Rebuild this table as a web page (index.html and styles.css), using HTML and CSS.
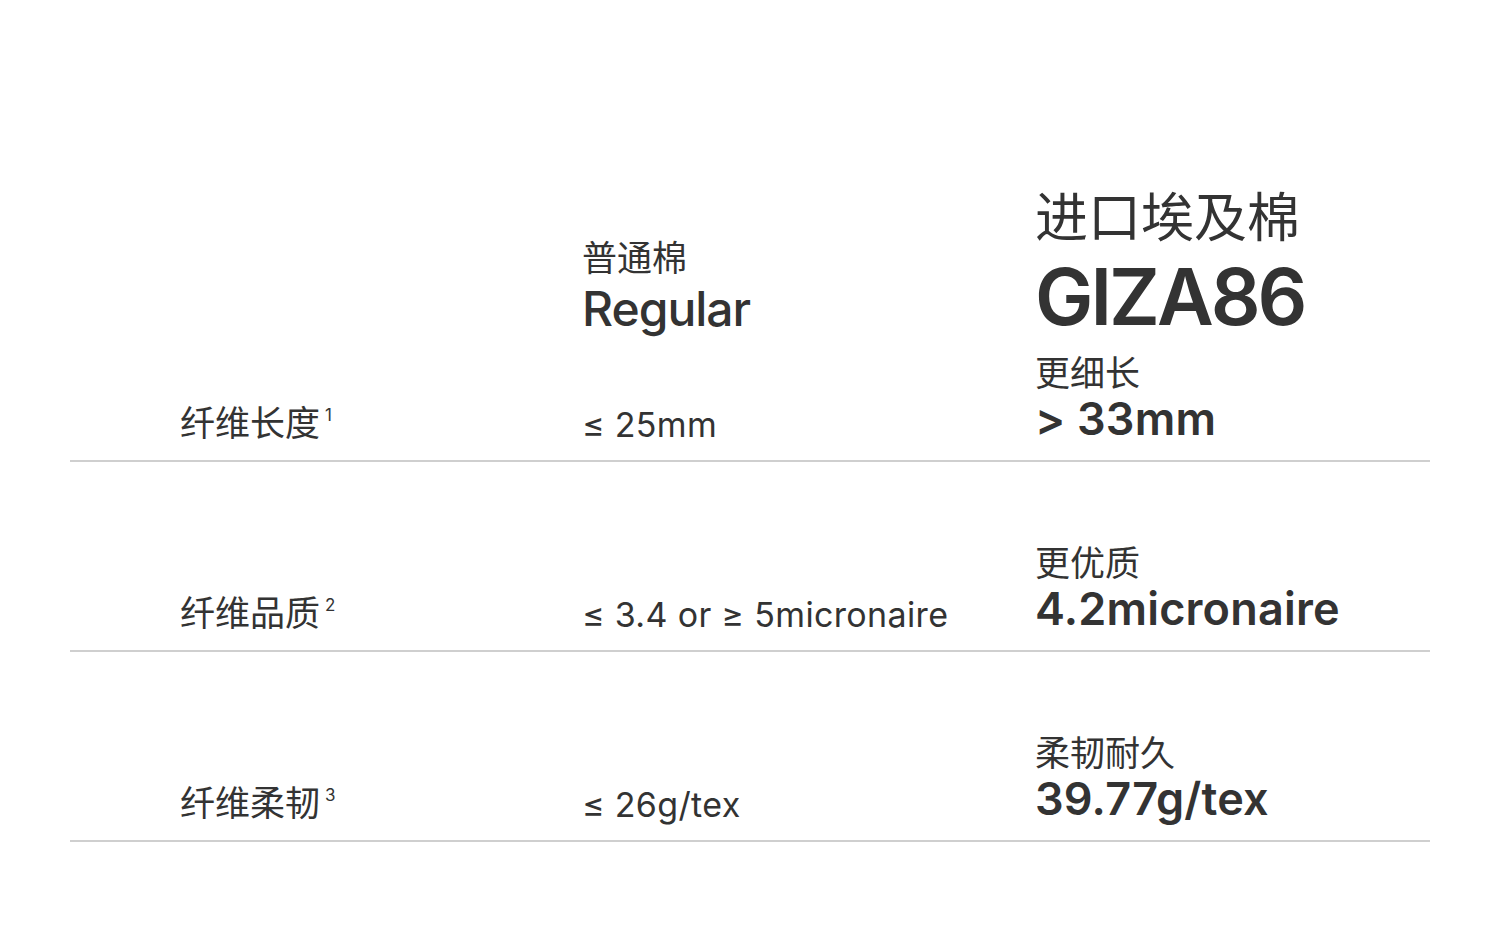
FILE: index.html
```html
<!DOCTYPE html>
<html lang="zh-CN">
<head>
<meta charset="utf-8">
<title>GIZA86</title>
<link rel="stylesheet" href="styles.css">
</head>
<body>
<div class="page">
  <div class="table">
    <div class="head">
      <div class="cell"></div>
      <div class="cell mid">
        <div class="h-cn">普通棉</div>
        <div class="h-en">Regular</div>
      </div>
      <div class="cell">
        <div class="h-cn-big">进口埃及棉</div>
        <div class="h-en-big">GIZA86</div>
      </div>
    </div>
    <div class="row first">
      <div class="cell label">纤维长度<sup>1</sup></div>
      <div class="cell value">≤ 25mm</div>
      <div class="cell">
        <div class="hl-cn">更细长</div>
        <div class="hl-val">&gt; 33mm</div>
      </div>
    </div>
    <div class="row">
      <div class="cell label">纤维品质<sup>2</sup></div>
      <div class="cell value">≤ 3.4 or ≥ 5micronaire</div>
      <div class="cell">
        <div class="hl-cn">更优质</div>
        <div class="hl-val">4.2micronaire</div>
      </div>
    </div>
    <div class="row">
      <div class="cell label">纤维柔韧<sup>3</sup></div>
      <div class="cell value">≤ 26g/tex</div>
      <div class="cell">
        <div class="hl-cn">柔韧耐久</div>
        <div class="hl-val">39.77g/tex</div>
      </div>
    </div>
  </div>
</div>
</body>
</html>
```

FILE: styles.css
```css
* { box-sizing: border-box; }
html, body { margin: 0; padding: 0; background: #fff; }
body {
  font-family: Inter, "Noto Sans CJK SC", sans-serif;
  color: #333;
}
.page {
  padding: 186px 70px 0 70px;
}
.table {
  width: 1360px;
}
.head, .row {
  display: grid;
  grid-template-columns: 402px 453px 1fr;
  padding-left: 110px;
  align-items: end;
}
.head { height: 158px; }
.head .mid { padding-bottom: 6px; }
.row {
  height: 190px;
  border-bottom: 2px solid #cfcfcf;
  padding-bottom: 16px;
}
.row.first { height: 118px; }
.h-cn {
  font-size: 35px;
  line-height: 44px;
}
.h-en {
  font-size: 48px;
  line-height: 58px;
  font-weight: 500;
  letter-spacing: -1px;
}
.h-cn-big {
  font-size: 53px;
  line-height: 64px;
}
.h-en-big {
  font-size: 78px;
  line-height: 94px;
  font-weight: 600;
  letter-spacing: -3px;
}
.label {
  font-size: 35px;
  line-height: 42px;
}
.label sup {
  font-size: 17px;
  vertical-align: 15px;
  margin-left: 5px;
}
.value {
  font-size: 34px;
  line-height: 42px;
  letter-spacing: 0.35px;
  margin-bottom: -2px;
}
.hl-cn {
  font-size: 35px;
  line-height: 42px;
}
.hl-val {
  font-size: 45px;
  line-height: 50px;
  font-weight: 600;
  letter-spacing: 0.2px;
}
```
